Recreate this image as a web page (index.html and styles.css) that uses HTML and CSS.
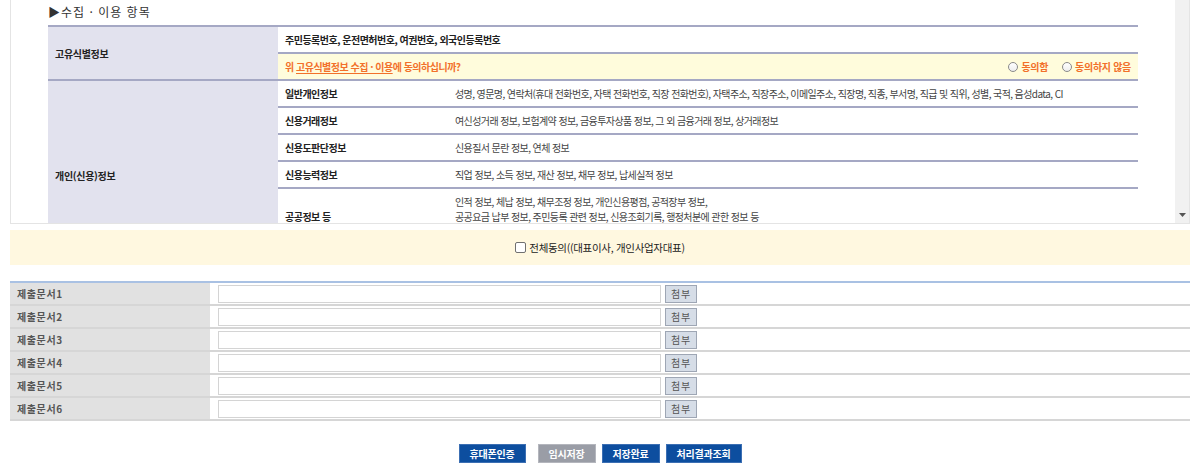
FILE: index.html
```html
<!DOCTYPE html>
<html lang="ko">
<head>
<meta charset="utf-8">
<title>수집 · 이용 항목</title>
<link rel="stylesheet" href="styles.css">
</head>
<body>
<div class="page">
  <div class="scrollbox">
    <div class="scroll-content">
      <div class="title">▶수집 · 이용 항목</div>
      <table class="terms">
        <colgroup><col class="c1"><col class="c2"><col></colgroup>
        <tr>
          <th rowspan="2" class="grp">고유식별정보</th>
          <td colspan="2" class="item">주민등록번호, 운전면허번호, 여권번호, 외국인등록번호</td>
        </tr>
        <tr class="ask">
          <td colspan="2">
            <div class="ask-row">
              <span class="q">위 <u>고유식별정보 수집 · 이용</u>에 동의하십니까?</span>
              <span class="opts">
                <label class="opt"><span class="radio"></span>동의함</label>
                <label class="opt"><span class="radio"></span>동의하지 않음</label>
              </span>
            </div>
          </td>
        </tr>
        <tr>
          <th rowspan="5" class="grp">개인(신용)정보</th>
          <td class="item">일반개인정보</td>
          <td class="desc">성명, 영문명, 연락처(휴대 전화번호, 자택 전화번호, 직장 전화번호), 자택주소, 직장주소, 이메일주소, 직장명, 직종, 부서명, 직급 및 직위, 성별, 국적, 음성data, CI</td>
        </tr>
        <tr>
          <td class="item">신용거래정보</td>
          <td class="desc">여신성거래 정보, 보험계약 정보, 금융투자상품 정보, 그 외 금융거래 정보, 상거래정보</td>
        </tr>
        <tr>
          <td class="item">신용도판단정보</td>
          <td class="desc">신용질서 문란 정보, 연체 정보</td>
        </tr>
        <tr>
          <td class="item">신용능력정보</td>
          <td class="desc">직업 정보, 소득 정보, 재산 정보, 채무 정보, 납세실적 정보</td>
        </tr>
        <tr class="last">
          <td class="item">공공정보 등</td>
          <td class="desc">인적 정보, 체납 정보, 채무조정 정보, 개인신용평점, 공적장부 정보,<br>공공요금 납부 정보, 주민등록 관련 정보, 신용조회기록, 행정처분에 관한 정보 등</td>
        </tr>
      </table>
    </div>
    <div class="scrollbar">
      <svg class="arrow" width="7" height="4" viewBox="0 0 7 4"><path d="M0 0H7L3.5 4Z" fill="#555"/></svg>
    </div>
  </div>

  <div class="agree-band">
    <label class="agree"><span class="check"></span>전체동의((대표이사, 개인사업자대표)</label>
  </div>

  <div class="docs">
    <div class="doc-row"><div class="doc-label">제출문서1</div><div class="doc-field"><span class="file-input"></span><span class="attach">첨부</span></div></div>
    <div class="doc-row"><div class="doc-label">제출문서2</div><div class="doc-field"><span class="file-input"></span><span class="attach">첨부</span></div></div>
    <div class="doc-row"><div class="doc-label">제출문서3</div><div class="doc-field"><span class="file-input"></span><span class="attach">첨부</span></div></div>
    <div class="doc-row"><div class="doc-label">제출문서4</div><div class="doc-field"><span class="file-input"></span><span class="attach">첨부</span></div></div>
    <div class="doc-row"><div class="doc-label">제출문서5</div><div class="doc-field"><span class="file-input"></span><span class="attach">첨부</span></div></div>
    <div class="doc-row"><div class="doc-label">제출문서6</div><div class="doc-field"><span class="file-input"></span><span class="attach">첨부</span></div></div>
  </div>

  <div class="actions">
    <span class="btn blue">휴대폰인증</span>
    <span class="btn gray">임시저장</span>
    <span class="btn blue">저장완료</span>
    <span class="btn blue">처리결과조회</span>
  </div>
</div>
</body>
</html>
```

FILE: styles.css
```css
* { box-sizing: border-box; }
html, body { margin: 0; padding: 0; background: #fff; }
body {
  font-family: "Noto Sans CJK KR", "Noto Sans", sans-serif;
  font-size: 10px;
  color: #333;
}
.page { padding: 0 10px; }

.scrollbox {
  display: flex;
  height: 224px;
  border: 1px solid #e4e4e4;
  border-top: none;
}
.scroll-content {
  flex: 1;
  overflow: hidden;
}
.scrollbar {
  width: 14px;
  background: #f1f1f1;
  display: flex;
  align-items: flex-end;
  justify-content: center;
  padding-bottom: 6px;
}
.title {
  height: 25px;
  line-height: 24px;
  padding-left: 37px;
  font-size: 12px;
  color: #333;
  letter-spacing: 1px;
}

.terms {
  width: calc(100% - 74px);
  margin: 0 auto;
  border-collapse: separate;
  border-spacing: 0;
  border-top: 2px solid #a5a8c4;
}
.terms col.c1 { width: 230px; }
.terms col.c2 { width: 170px; }
.terms th, .terms td {
  border-bottom: 2px solid #a5a8c4;
  padding: 6px 7px;
  line-height: 13px;
  text-align: left;
  vertical-align: middle;
}
.terms th.grp {
  background: #e2e2ee;
  font-weight: bold;
  color: #222;
  padding-left: 7px;
  letter-spacing: -0.3px;
}
.terms td.item {
  font-weight: bold;
  color: #222;
  letter-spacing: -0.5px;
}
.terms td.desc {
  color: #444;
  letter-spacing: -0.6px;
}
.terms tr.ask td { background: #fffcdc; }
.ask-row { display: flex; justify-content: space-between; align-items: center; }
.q { color: #f2702a; font-weight: bold; letter-spacing: -0.5px; }
.q u { text-underline-offset: 2px; }
.opts { display: flex; gap: 14px; }
.opt { display: flex; align-items: center; gap: 3px; color: #f2702a; font-weight: bold; letter-spacing: -0.3px; }
.radio {
  width: 10px; height: 10px;
  border: 1px solid #8a8a8a;
  border-radius: 50%;
  background: linear-gradient(#fff, #eee);
}
.terms tr.last td { height: 82px; vertical-align: top; }
.terms tr.last td.item { padding-top: 21px; }
.terms tr.last td.desc { padding-top: 5px; line-height: 15px; }

.agree-band {
  margin-top: 6px;
  height: 35px;
  background: #fff8e0;
  display: flex;
  align-items: center;
  justify-content: center;
}
.agree { display: flex; align-items: center; gap: 3px; font-size: 10.5px; color: #222; letter-spacing: -0.3px; }
.check {
  width: 11px; height: 11px;
  border: 1px solid #707070;
  border-radius: 2px;
  background: #fff;
}

.docs {
  margin-top: 16px;
  border-top: 2px solid #a9c1e3;
}
.doc-row {
  display: flex;
  height: 23px;
  border-bottom: 2px solid #d6d6d6;
}
.doc-label {
  width: 200px;
  background: #e1e1e1;
  padding-left: 7px;
  line-height: 21px;
  font-weight: bold;
  color: #555;
  letter-spacing: 0.6px;
}
.doc-field {
  flex: 1;
  display: flex;
  align-items: center;
  gap: 4px;
  padding-left: 8px;
}
.file-input {
  width: 443px;
  height: 18px;
  border: 1px solid #d4d4d4;
  background: #fff;
}
.attach {
  width: 32px;
  height: 18px;
  line-height: 16px;
  text-align: center;
  background: #d6dde7;
  border: 1px solid #9ea6b4;
  color: #555;
  font-size: 10px;
  letter-spacing: 0.8px;
}

.actions {
  margin-top: 23px;
  display: flex;
  justify-content: center;
  gap: 6px;
}
.btn {
  height: 19px;
  line-height: 17px;
  padding: 0 10px;
  color: #fff;
  font-weight: bold;
  font-size: 10px;
  letter-spacing: -0.2px;
  border: 1px solid;
}
.btn.blue { background: #0d4e9f; border-color: #3c6fb3; }
.btn.gray { background: #9a9da6; border-color: #b4b6bd; margin-left: 6px; }
```
